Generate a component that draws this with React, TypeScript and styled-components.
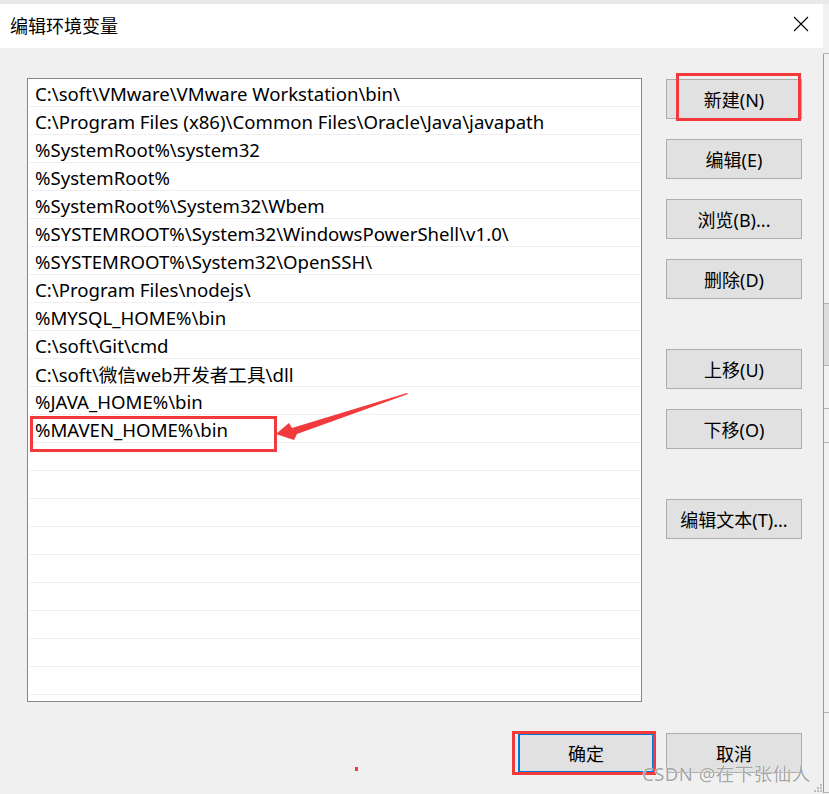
import React from "react";
import styled, { createGlobalStyle } from "styled-components";

const Global = createGlobalStyle`
  html, body { margin: 0; padding: 0; background: #f0f0f0; }
  body { width: 829px; height: 794px; overflow: hidden; font-family: "Noto Sans", "Noto Sans CJK SC", sans-serif; }
`;

const Screen = styled.div`
  width: 829px;
  height: 794px;
  display: flex;
  flex-direction: column;
  background: #ebebeb;
  position: relative;
  overflow: hidden;
`;

const TopStrip = styled.div`
  height: 4px;
  background: #e9e9e9;
`;

const Main = styled.div`
  flex: 1;
  display: flex;
`;

const Dialog = styled.div`
  width: 823px;
  display: flex;
  flex-direction: column;
  background: #f0f0f0;
  position: relative;
`;

const SideStrip = styled.div`
  flex: 1;
  background: #f2f2f2;
  display: flex;
  flex-direction: column;
`;

const SideSeg = styled.div<{ $h: number; $line?: boolean; $dark?: boolean }>`
  height: ${(p) => p.$h}px;
  border-left: ${(p) => (p.$line ? "1px solid #9a9a9a" : "1px solid transparent")};
  border-bottom: 1px solid #b4b4b4;
  background: ${(p) => (p.$dark ? "#dcdcdc" : "transparent")};
  box-sizing: border-box;
`;

const TitleBar = styled.div`
  height: 44px;
  background: #ffffff;
  display: flex;
  align-items: center;
  justify-content: space-between;
  padding: 0 14px 0 10px;
`;

const Title = styled.div`
  font-family: "Noto Sans CJK SC", sans-serif;
  font-size: 18px;
  color: #000;
  line-height: 1;
  margin-top: -2px;
`;

const CloseIcon = styled.svg`
  width: 16px;
  height: 16px;
  margin-top: -4px;
`;

const Body = styled.div`
  flex: 1;
  display: flex;
  flex-direction: column;
  padding: 30px 21px 0 27px;
`;

const Content = styled.div`
  display: flex;
  gap: 24px;
`;

const ListBox = styled.div`
  width: 616px;
  height: 624px;
  box-sizing: border-box;
  border: 1px solid #828790;
  background: #fff;
  padding: 0 1px;
  display: flex;
  flex-direction: column;
`;

const Row = styled.div`
  height: 28px;
  box-sizing: border-box;
  border-bottom: 1px solid #efefef;
  display: flex;
  align-items: center;
  padding-left: 6px;
  padding-top: 2px;
  font-size: 18.6px;
  color: #000;
  white-space: nowrap;
  overflow: hidden;
`;

const Buttons = styled.div`
  display: flex;
  flex-direction: column;
  padding-top: 1px;
`;

const Btn = styled.div<{ $gap?: number; $focus?: boolean }>`
  width: 136px;
  height: 40px;
  box-sizing: border-box;
  margin-top: ${(p) => p.$gap ?? 0}px;
  background: #e1e1e1;
  border: ${(p) => (p.$focus ? "2px solid #0078d7" : "1px solid #adadad")};
  display: flex;
  align-items: center;
  justify-content: center;
  font-size: 18px;
  color: #000;
  padding-bottom: 1px;
  white-space: nowrap;
`;

const Footer = styled.div`
  display: flex;
  justify-content: flex-end;
  gap: 12px;
  margin-top: 31px;
`;

const Mark = styled.div`
  position: absolute;
  border: 3px solid #f2393c;
  box-sizing: border-box;
  pointer-events: none;
`;

const Arrow = styled.svg`
  position: absolute;
  left: 0;
  top: 0;
  width: 829px;
  height: 794px;
  pointer-events: none;
`;

const Watermark = styled.div`
  position: absolute;
  left: 642px;
  top: 762px;
  font-family: "Noto Sans", "Noto Sans CJK SC", sans-serif;
  font-size: 18.5px;
  color: rgba(140, 140, 140, 0.8);
  text-shadow: 0 0 1px #fff, 0 0 1px #fff;
  letter-spacing: 0.5px;
  line-height: 1.3;
  white-space: nowrap;
`;

const Dot = styled.div`
  position: absolute;
  left: 355px;
  top: 767px;
  width: 3px;
  height: 4px;
  background: #f2393c;
`;

const Grip = styled.svg`
  position: absolute;
  left: 813px;
  top: 783px;
  width: 10px;
  height: 10px;
`;

const rows = [
  "C:\\soft\\VMware\\VMware Workstation\\bin\\",
  "C:\\Program Files (x86)\\Common Files\\Oracle\\Java\\javapath",
  "%SystemRoot%\\system32",
  "%SystemRoot%",
  "%SystemRoot%\\System32\\Wbem",
  "%SYSTEMROOT%\\System32\\WindowsPowerShell\\v1.0\\",
  "%SYSTEMROOT%\\System32\\OpenSSH\\",
  "C:\\Program Files\\nodejs\\",
  "%MYSQL_HOME%\\bin",
  "C:\\soft\\Git\\cmd",
  "C:\\soft\\微信web开发者工具\\dll",
  "%JAVA_HOME%\\bin",
  "%MAVEN_HOME%\\bin",
];

export default function App() {
  const all = [...rows, ...Array(22 - rows.length).fill("")];
  return (
    <Screen>
      <Global />
      <TopStrip />
      <Main>
        <Dialog>
          <TitleBar>
            <Title>编辑环境变量</Title>
            <CloseIcon viewBox="0 0 16 16">
              <path d="M1 1 L15 15 M15 1 L1 15" stroke="#000" strokeWidth="1.1" fill="none" />
            </CloseIcon>
          </TitleBar>
          <Body>
            <Content>
              <ListBox>
                {all.map((r, i) => (
                  <Row key={i}>{r}</Row>
                ))}
              </ListBox>
              <Buttons>
                <Btn>新建(N)</Btn>
                <Btn $gap={20}>编辑(E)</Btn>
                <Btn $gap={20}>浏览(B)...</Btn>
                <Btn $gap={20}>删除(D)</Btn>
                <Btn $gap={50}>上移(U)</Btn>
                <Btn $gap={20}>下移(O)</Btn>
                <Btn $gap={50}>编辑文本(T)...</Btn>
              </Buttons>
            </Content>
            <Footer>
              <Btn $focus>确定</Btn>
              <Btn>取消</Btn>
            </Footer>
          </Body>
        </Dialog>
        <SideStrip>
          <SideSeg $h={50} />
          <SideSeg $h={250} $line />
          <SideSeg $h={62} $line $dark />
          <SideSeg $h={43} $line />
          <SideSeg $h={34} $line />
          <SideSeg $h={270} $line />
          <SideSeg $h={80} $line />
        </SideStrip>
      </Main>
      <Mark style={{ left: 676, top: 73, width: 125, height: 48 }} />
      <Mark style={{ left: 30, top: 416, width: 247, height: 36 }} />
      <Mark style={{ left: 512, top: 731, width: 144, height: 44 }} />
      <Arrow viewBox="0 0 829 794">
        <polygon
          points="276,434 289,423 292,428 407,393 408,394 297,434 294,440"
          fill="#f2393c"
        />
      </Arrow>
      <Dot />
      <Watermark>CSDN @在下张仙人</Watermark>
      <Grip viewBox="0 0 10 10">
        <rect x="7" y="1" width="2" height="2" fill="#bdbdbd" />
        <rect x="4" y="4" width="2" height="2" fill="#bdbdbd" />
        <rect x="7" y="4" width="2" height="2" fill="#bdbdbd" />
        <rect x="1" y="7" width="2" height="2" fill="#bdbdbd" />
        <rect x="4" y="7" width="2" height="2" fill="#bdbdbd" />
        <rect x="7" y="7" width="2" height="2" fill="#bdbdbd" />
      </Grip>
    </Screen>
  );
}
